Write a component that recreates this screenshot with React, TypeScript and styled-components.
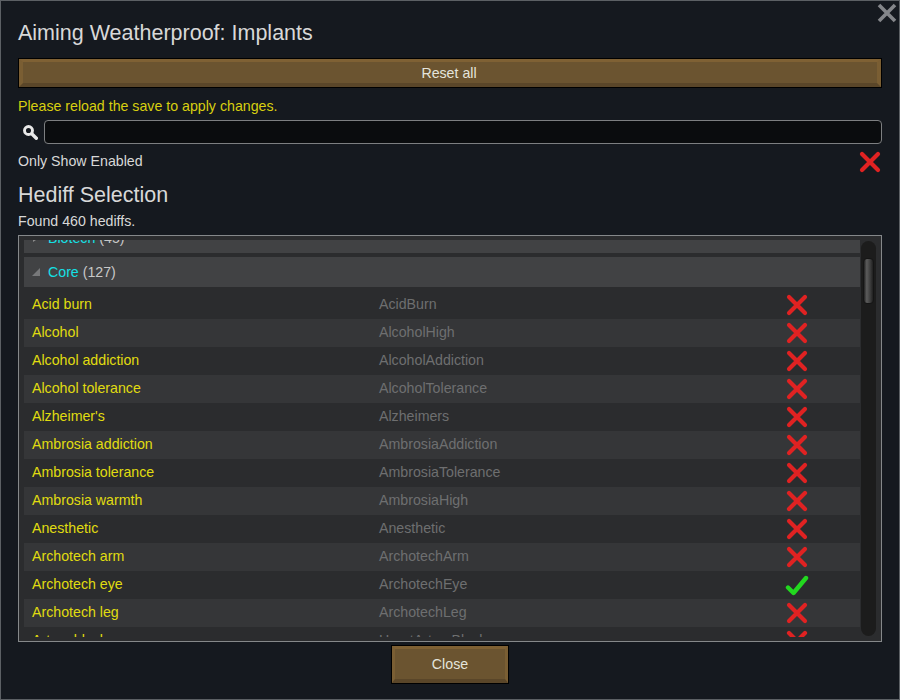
import React from "react";
import styled, { createGlobalStyle } from "styled-components";

const GlobalStyle = createGlobalStyle`
  html, body {
    margin: 0;
    padding: 0;
    background: #15191f;
  }
  body {
    font-family: "Liberation Sans", Arial, sans-serif;
  }
`;

const Win = styled.div`
  position: relative;
  box-sizing: border-box;
  width: 900px;
  height: 700px;
  padding: 21px 17px 0;
  display: flex;
  flex-direction: column;
  background: #15191f;
  border: 1px solid #5c6064;
  color: #d8d8d8;
  overflow: hidden;
`;

const CloseX = styled.svg`
  position: absolute;
  top: 2px;
  right: 2px;
  width: 20px;
  height: 20px;
`;

const Title = styled.h1`
  margin: 0;
  height: 22px;
  font-size: 21.5px;
  line-height: 23px;
  font-weight: 400;
  color: #d8d8d8;
`;

const BevelButton = styled.button`
  box-sizing: border-box;
  display: block;
  padding: 0;
  font-family: inherit;
  font-size: 14.2px;
  color: #e4e4dc;
  background: #6b5430;
  outline: 1px solid #000;
  outline-offset: -1px;
  border-style: solid;
  border-color: #7f6134 #7a5e33 #5a4629 #7a5e33;
`;

const ResetButton = styled(BevelButton)`
  width: 100%;
  height: 30px;
  margin-top: 14px;
  padding-right: 2px;
  border-width: 4px 5px 5px 5px;
`;

const Notice = styled.div`
  margin-top: 10px;
  height: 17px;
  font-size: 14.2px;
  line-height: 17px;
  color: #d8cf10;
`;

const SearchRow = styled.div`
  margin-top: 5px;
  height: 24px;
  display: flex;
  align-items: center;
`;

const SearchIcon = styled.svg`
  width: 16px;
  height: 16px;
  margin: 0 6px 0 4px;
  flex: none;
`;

const SearchInput = styled.div`
  box-sizing: border-box;
  flex: 1;
  height: 24px;
  background: #0a0c0e;
  border: 1px solid #7d7f81;
  border-radius: 4px;
`;

const ToggleRow = styled.div`
  margin-top: 5px;
  height: 24px;
  display: flex;
  align-items: center;
  justify-content: space-between;
  font-size: 14.2px;

  svg {
    margin-top: 2px;
  }
`;

const Heading = styled.h2`
  margin: 10px 0 0;
  height: 24px;
  font-size: 21.5px;
  line-height: 24px;
  font-weight: 400;
  color: #d8d8d8;
`;

const Found = styled.div`
  margin-top: 6px;
  height: 17px;
  font-size: 14.2px;
  line-height: 17px;
`;

const ListBox = styled.div`
  box-sizing: border-box;
  position: relative;
  margin-top: 5px;
  height: 407px;
  padding: 4px 21px 4px 5px;
  background: #2b2c2e;
  border: 1px solid #85888a;
`;

const Viewport = styled.div`
  height: 397px;
  overflow: hidden;
`;

const GroupHeader = styled.div<{ $clipped?: boolean }>`
  box-sizing: border-box;
  height: 30px;
  margin-top: ${(p) => (p.$clipped ? "-17px" : "0")};
  margin-bottom: 4px;
  padding: 0 0 1px 8px;
  display: flex;
  align-items: center;
  gap: 8px;
  background: #414244;
  font-size: 14.2px;
  color: #c8c8c8;
`;

const Arrow = styled.span<{ $open?: boolean }>`
  width: 0;
  height: 0;
  ${(p) =>
    p.$open
      ? `border-left: 8px solid transparent; border-bottom: 8px solid #77787a;`
      : `margin: 0 1px; border-top: 4px solid transparent; border-bottom: 4px solid transparent; border-left: 6px solid #8a8a8a;`}
`;

const GroupName = styled.span`
  color: #14e0e6;
`;

const Row = styled.div<{ $odd: boolean }>`
  height: 28px;
  display: grid;
  grid-template-columns: 347px 406px 24px;
  align-items: center;
  padding-left: 8px;
  background: ${(p) => (p.$odd ? "#353638" : "transparent")};
  font-size: 14.2px;
  line-height: 26px;
`;

const Label = styled.span`
  color: #e0dc10;
  padding-bottom: 2px;
`;

const DefName = styled.span`
  color: #6e6f70;
  padding-bottom: 2px;
`;

const StateIcon = styled.svg`
  width: 24px;
  height: 24px;
  display: block;
`;

const ScrollTrack = styled.div`
  position: absolute;
  top: 5px;
  right: 5px;
  width: 15px;
  height: 395px;
  padding-top: 17px;
  box-sizing: border-box;
  background: #1c1c1c;
  border-radius: 8px;
`;

const ScrollThumb = styled.div`
  box-sizing: border-box;
  margin-left: 2px;
  width: 11px;
  height: 46px;
  border: 1px solid #151515;
  border-radius: 4px;
  background: linear-gradient(to right, #222, #5c5c5c 30%, #3c3c3c 70%, #202020);
`;

const Footer = styled.div`
  display: flex;
  justify-content: center;
  margin-top: 3px;
`;

const CloseButton = styled(BevelButton)`
  width: 118px;
  height: 39px;
  padding-bottom: 1px;
  border-width: 4px 4px 5px 4px;
`;

const Cross = () => (
  <StateIcon viewBox="0 0 24 24">
    <path d="M4 4 L20 20 M20 4 L4 20" stroke="#e02222" strokeWidth="4.2" strokeLinecap="round" fill="none" />
  </StateIcon>
);

const Check = () => (
  <StateIcon viewBox="0 0 24 24">
    <path d="M3 14.5 L8.5 20 L21 5" stroke="#22d81f" strokeWidth="4.4" strokeLinecap="round" strokeLinejoin="round" fill="none" />
  </StateIcon>
);

const hediffs: [string, string, boolean][] = [
  ["Acid burn", "AcidBurn", false],
  ["Alcohol", "AlcoholHigh", false],
  ["Alcohol addiction", "AlcoholAddiction", false],
  ["Alcohol tolerance", "AlcoholTolerance", false],
  ["Alzheimer's", "Alzheimers", false],
  ["Ambrosia addiction", "AmbrosiaAddiction", false],
  ["Ambrosia tolerance", "AmbrosiaTolerance", false],
  ["Ambrosia warmth", "AmbrosiaHigh", false],
  ["Anesthetic", "Anesthetic", false],
  ["Archotech arm", "ArchotechArm", false],
  ["Archotech eye", "ArchotechEye", true],
  ["Archotech leg", "ArchotechLeg", false],
  ["Artery blockage", "HeartArteryBlockage", false],
];

export default function App() {
  return (
    <Win>
      <GlobalStyle />
      <CloseX viewBox="0 0 20 20">
        <path d="M2 2 L18 18 M18 2 L2 18" stroke="#84868a" strokeWidth="3.6" fill="none" />
      </CloseX>
      <Title>Aiming Weatherproof: Implants</Title>
      <ResetButton>Reset all</ResetButton>
      <Notice>Please reload the save to apply changes.</Notice>
      <SearchRow>
        <SearchIcon viewBox="0 0 16 16">
          <circle cx="6.5" cy="6.5" r="4" stroke="#e8e8e8" strokeWidth="2.9" fill="none" />
          <path d="M10 10 L14.3 14.3" stroke="#e8e8e8" strokeWidth="3.4" strokeLinecap="round" />
        </SearchIcon>
        <SearchInput />
      </SearchRow>
      <ToggleRow>
        <span>Only Show Enabled</span>
        <Cross />
      </ToggleRow>
      <Heading>Hediff Selection</Heading>
      <Found>Found 460 hediffs.</Found>
      <ListBox>
        <Viewport>
          <GroupHeader $clipped>
            <Arrow />
            <span>
              <GroupName>Biotech</GroupName> (45)
            </span>
          </GroupHeader>
          <GroupHeader>
            <Arrow $open />
            <span>
              <GroupName>Core</GroupName> (127)
            </span>
          </GroupHeader>
          {hediffs.map(([label, def, on], i) => (
            <Row key={def} $odd={i % 2 === 1}>
              <Label>{label}</Label>
              <DefName>{def}</DefName>
              {on ? <Check /> : <Cross />}
            </Row>
          ))}
        </Viewport>
        <ScrollTrack>
          <ScrollThumb />
        </ScrollTrack>
      </ListBox>
      <Footer>
        <CloseButton>Close</CloseButton>
      </Footer>
    </Win>
  );
}
